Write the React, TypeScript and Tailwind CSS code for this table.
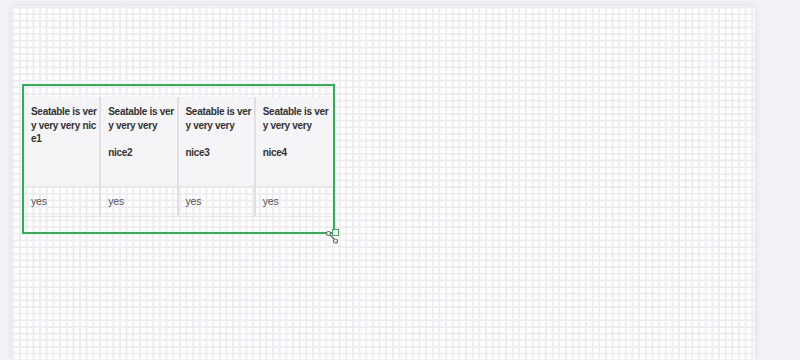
import React from 'react';

const headers: string[][] = [
  ['Seatable is ver', 'y very very nic', 'e1'],
  ['Seatable is ver', 'y very very', '', 'nice2'],
  ['Seatable is ver', 'y very very', '', 'nice3'],
  ['Seatable is ver', 'y very very', '', 'nice4'],
];

function ResizeHandle() {
  return (
    <>
      <svg width="14" height="14" viewBox="0 0 14 14" className="absolute left-[301px] top-[144px]">
        <circle cx="3.5" cy="3.5" r="2" fill="white" stroke="#6b6b6b" strokeWidth="1.2" />
        <line x1="5" y1="5" x2="9" y2="9" stroke="#6b6b6b" strokeWidth="1.2" />
        <circle cx="10.5" cy="11" r="2" fill="white" stroke="#6b6b6b" strokeWidth="1.2" />
      </svg>
      <div className="absolute left-[308px] top-[143px] w-[7px] h-[7px] bg-white border-[1.5px] border-[#2db24f]" />
    </>
  );
}

export default function App() {
  return (
    <div className="w-[800px] h-[360px] bg-[#f2f1f6] overflow-hidden font-['Liberation_Sans',Arial,sans-serif]">
      <div className="ml-[12px] mt-[6px] w-[743px] h-[354px] bg-white shadow-[0_0_6px_rgba(60,50,90,0.12)] bg-[linear-gradient(to_right,#eeecf1_1.5px,transparent_1.5px),linear-gradient(to_bottom,#eeecf1_1.5px,transparent_1.5px)] bg-[length:6.67px_6.67px] bg-[position:0.5px_0.5px] pt-[78px] pl-[10px]">
        <div className="relative w-[313px] h-[150px] border-2 border-[#2db24f] pt-[11px]">
          <div className="flex">
            {headers.map((lines, i) => (
              <div
                key={i}
                className={`w-[77.25px] flex flex-col ${i < 3 ? 'border-r-2 border-[#e0dfe3]' : ''}`}
              >
                <div className="h-[90px] bg-[#f5f4f6] border-b border-[#e3e2e6] px-[7px] pt-[8px] text-[10px] font-bold tracking-[-0.3px] text-[#333] leading-[13.7px]">
                  {lines.map((l, j) => (
                    <div key={j} className="h-[13.7px] whitespace-pre">{l}</div>
                  ))}
                </div>
                <div className="h-[29px] px-[7px] pt-px flex items-center text-[10.5px] tracking-[-0.2px] text-[#555]">yes</div>
              </div>
            ))}
          </div>
          <div className="w-[309px] h-px bg-[#e8e7ea]" />
          <ResizeHandle />
        </div>
      </div>
    </div>
  );
}
